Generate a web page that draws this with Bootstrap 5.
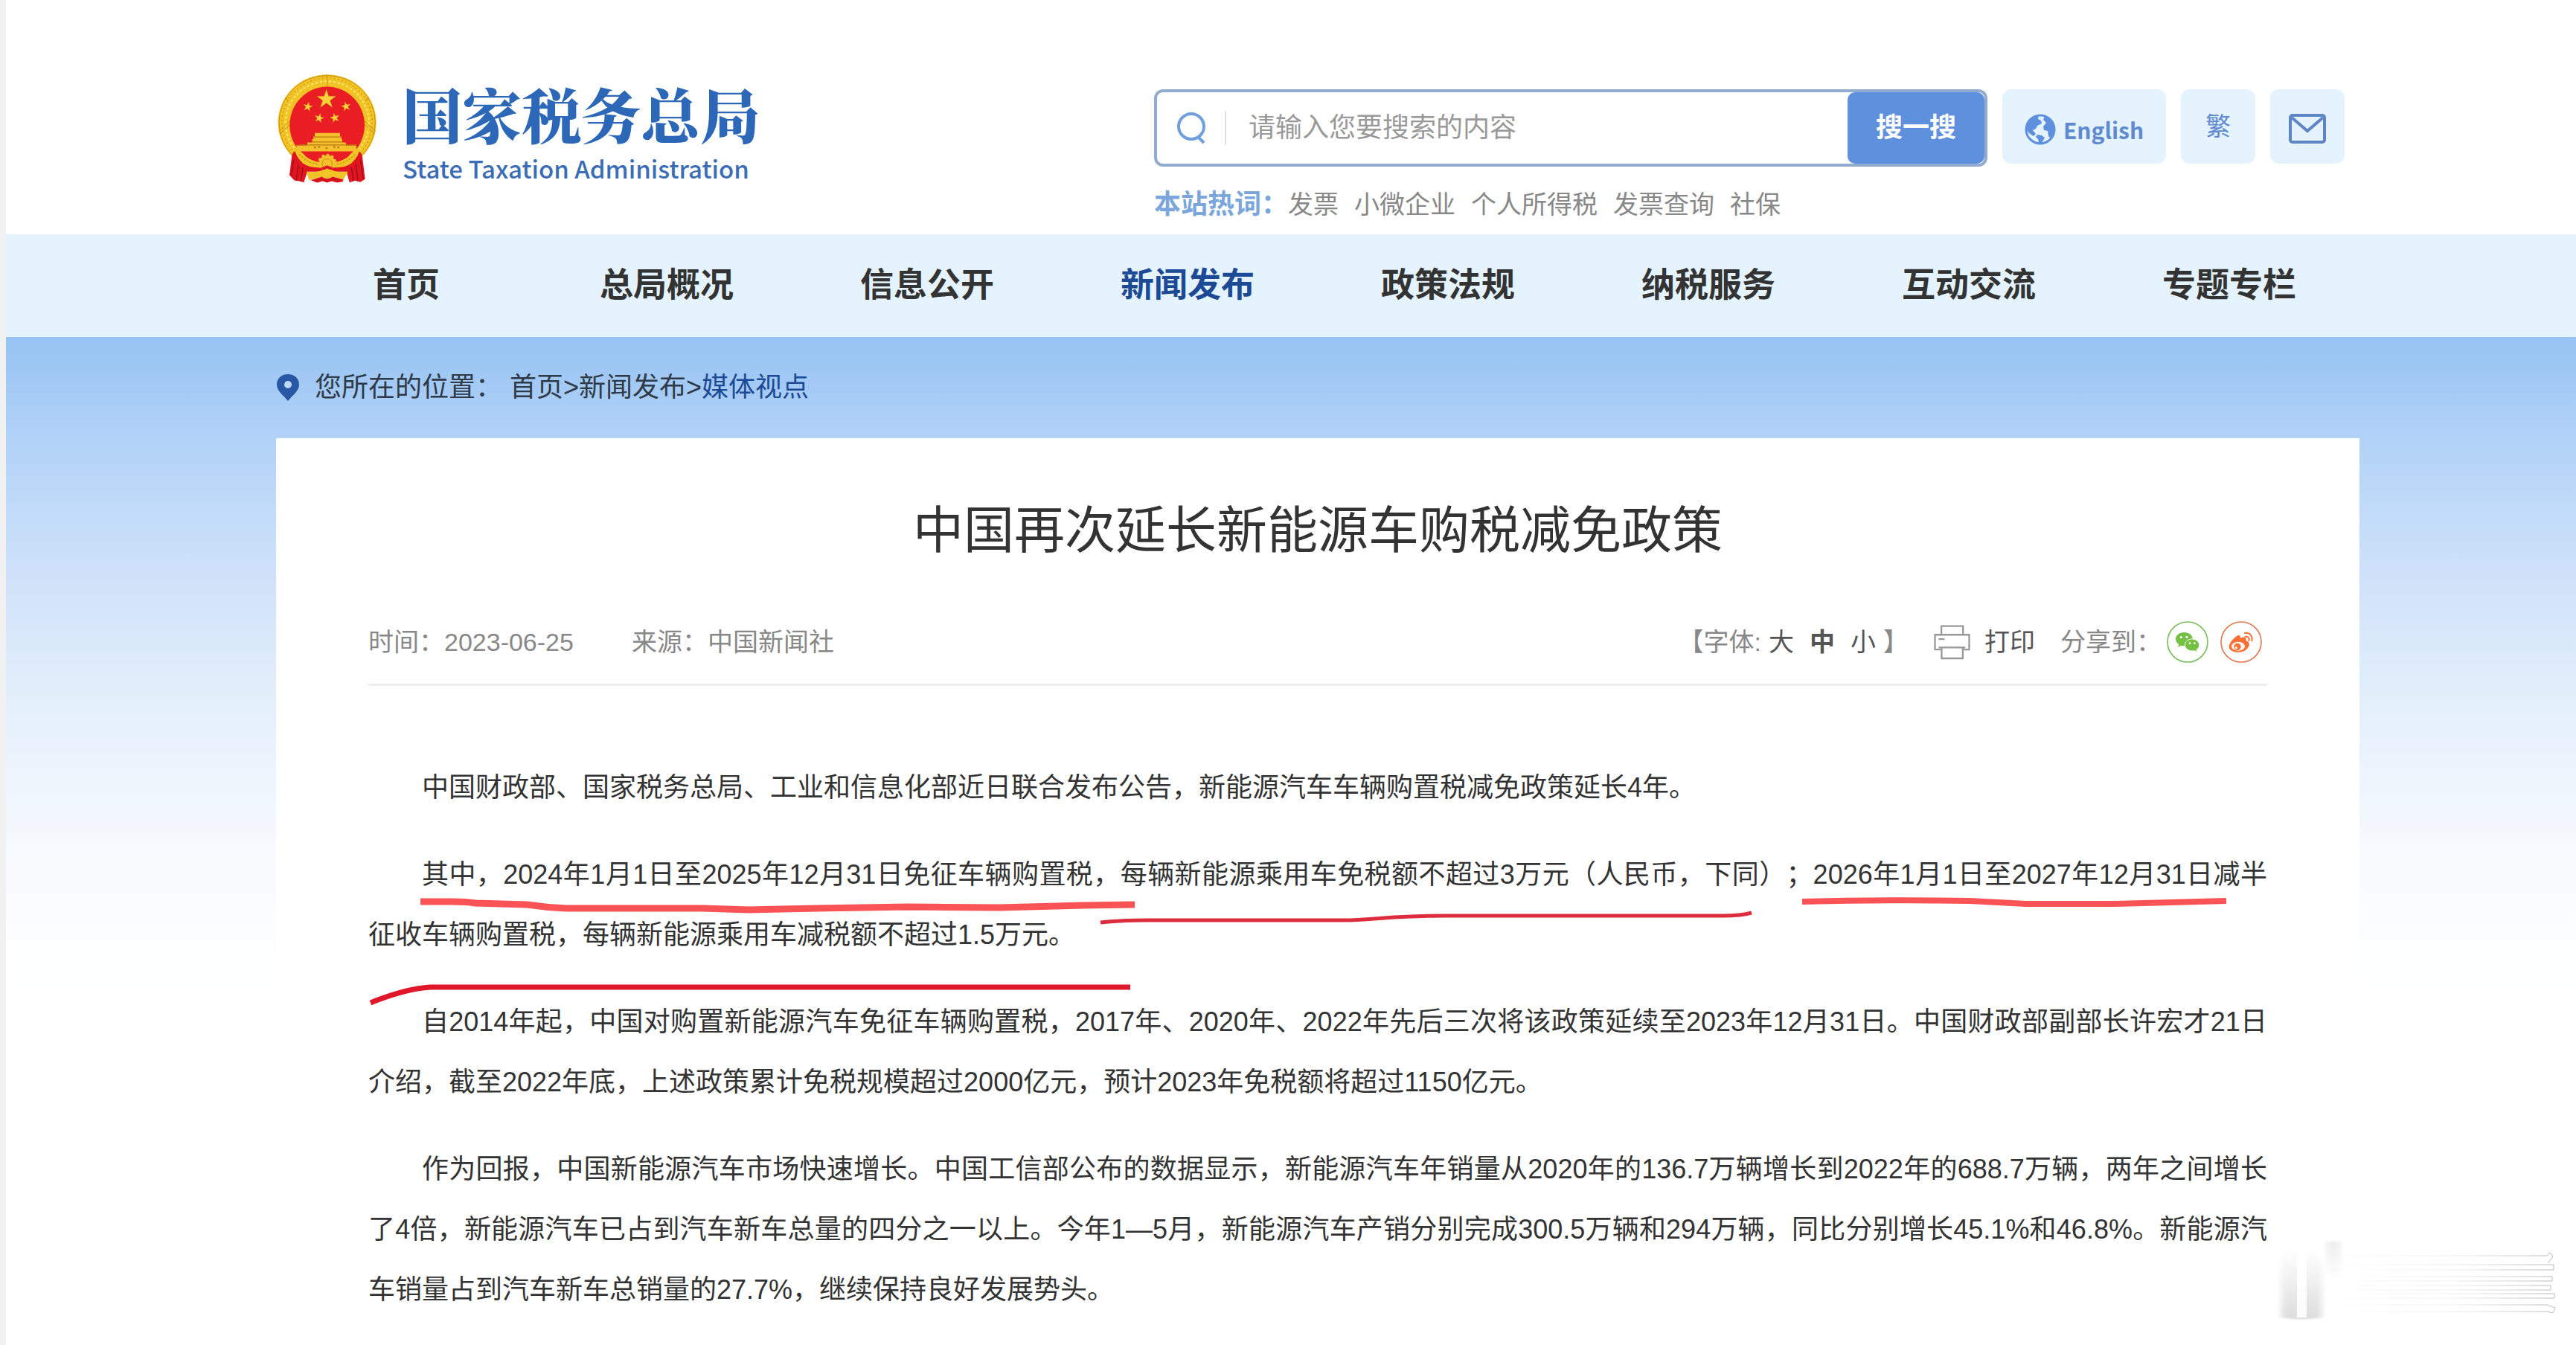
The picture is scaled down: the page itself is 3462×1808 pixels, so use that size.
<!DOCTYPE html>
<html lang="zh-CN">
<head>
<meta charset="utf-8">
<meta name="viewport" content="width=device-width, initial-scale=1">
<title>中国再次延长新能源车购税减免政策</title>
<link href="https://cdn.jsdelivr.net/npm/bootstrap@5.3.0/dist/css/bootstrap.min.css" rel="stylesheet">
<style>
body{font-family:"Liberation Sans","Noto Sans CJK SC",sans-serif;font-size:36px;color:#333;background:#fff;border-left:8px solid #f1f1f1;overflow-x:hidden;text-spacing-trim:space-all}
a{text-decoration:none;color:inherit}
svg{flex-shrink:0}
.site-wrap{padding-left:363px;padding-right:291px}
.site-head{height:315px}
.brand{padding-top:100px;gap:34px}
.brand-cn{font-family:"Noto Serif CJK SC","Noto Sans CJK SC",serif;font-weight:900;font-size:80px;line-height:108px;color:#2d68b8}
.brand-en{font-family:"Noto Sans CJK SC",sans-serif;font-weight:500;font-size:33px;line-height:40px;color:#3a6db5}
.brand-text{margin-top:-2px}
.tools{width:1620px;padding-top:120px}
.tool-row{gap:20px}
.search-box{width:1120px;height:104px;border:4px solid #94abd0;border-radius:12px;background:#fff;padding-left:26px}
.search-box input{font-size:36px;color:#333;border:0;box-shadow:none!important;padding:0 0 0 30px;background:none}
.search-box input::placeholder{color:#999;opacity:1}
.sep{width:2px;height:46px;background:#dde1e6;margin-left:25px}
.btn-go{width:184px;background:#5f90de;color:#fff;font-weight:700;font-size:36px;border:0;border-radius:10px}
.btn-tool{height:100px;background:#e4f3fe;border:0;border-radius:12px;color:#5f8ad0;font-size:34px;width:100px;padding:0}
.btn-lang{width:220px;font-family:"Noto Sans CJK SC",sans-serif;font-weight:700;font-size:30px;gap:10px;padding-top:8px}
.hot{font-size:34px;line-height:54px;color:#888;margin-top:24px}
.hot strong{font-size:36px;color:#7ba6dc}
.hot-list{gap:21px}
.main-nav{background:#e4f3fe}
.main-nav .nav-link{font-size:45px;font-weight:700;color:#333;line-height:138px;padding:0}
.main-nav .nav-link.active{color:#1c4a94}
.backdrop{background:linear-gradient(#96c3f2 0,#b0d1f7 128px,#c6def9 268px,#d2e2f9 338px,#e0eefb 464px,#edf4fd 583px,#f7fafe 690px,#fdfefe 830px,#fff 900px)}
.crumb{height:136px;color:#2f3a48}
.crumb svg{margin-right:20px}
.crumb a.cur{color:#1c4a94}
.crumb-path{margin-left:10px}
.paper{background:#fff;padding:76px 124px 34px}
.paper h1{font-size:68px;line-height:96px;font-weight:400;color:#333}
.meta{font-size:34px;line-height:56px;height:87px;color:#888;margin-top:74px;padding-bottom:28px;border-bottom:3px solid #eee}
.meta-src{gap:78px}
.meta-tools{padding-right:7px}
.meta button{border:0;background:none;padding:0;color:#555;line-height:56px}
.sizes{gap:21px;margin:0 10px}
.print-btn{gap:19px;margin:0 34px}
.share{gap:16px;margin-left:7px}
.article{margin-top:96px;position:relative}
.article p{font-size:36px;line-height:81px;margin:0 0 36px;text-indent:2em;text-align:justify}
.article p:last-of-type{margin-bottom:0}
.marks{position:absolute;left:0;top:0;overflow:visible;pointer-events:none}
.smudge{position:absolute;right:0;bottom:0;pointer-events:none}
</style>
<script src="https://cdn.jsdelivr.net/npm/bootstrap@5.3.0/dist/js/bootstrap.bundle.min.js"></script>
</head>
<body class="position-relative">
<header class="site-wrap site-head d-flex justify-content-between">
  <a href="#" class="brand d-flex align-items-start">
    <svg width="136" height="147" viewBox="34 28 408 440" aria-hidden="true">
      <defs><path id="star" d="M0-40 9-12.500 38-12.500 15 5 24 32 0 15-24 32-15 5-38-12.500-9-12.500Z"/></defs>
      <ellipse cx="240" cy="222" rx="198" ry="194" fill="#f2c324"/>
      <g fill="none" stroke="#c98f14" stroke-width="5">
        <ellipse cx="240" cy="222" rx="194" ry="190" stroke-width="3"/>
        <ellipse cx="240" cy="222" rx="182" ry="180" stroke-dasharray="4 12"/>
        <ellipse cx="240" cy="222" rx="168" ry="166" stroke="#fbe36a" stroke-width="7" stroke-dasharray="10 8"/>
        <path d="M45 258 100 205M48 268l54-50M435 258 380 205M432 268l-54-50M240 30v46M70 122l14 8M410 122l-14 8" stroke-width="3"/>
      </g>
      <ellipse cx="240" cy="232" rx="151" ry="155" fill="#ea1c24"/>
      <g fill="#fbd23c" stroke="#c9891a" stroke-width="2">
        <use href="#star" x="237" y="128"/>
        <use href="#star" transform="translate(162 158) rotate(12) scale(.5)"/>
        <use href="#star" transform="translate(316 157) rotate(-12) scale(.5)"/>
        <use href="#star" transform="translate(208 204) rotate(14) scale(.5)"/>
        <use href="#star" transform="translate(271 203) rotate(-14) scale(.5)"/>
      </g>
      <path d="M190 264h102v14h5v10h4v14h15v12h42v24H116v-24h44v-12h20v-14h5v-10h5z" fill="#f5c02c"/>
      <path d="M186 280h111M181 300h120M124 312h234" stroke="#b87a12" stroke-width="4" fill="none"/>
      <path d="M187 322h8M203 320h8M234 325h8M265 320h8M281 322h8" stroke="#c2761a" stroke-width="7"/>
      <path d="M98 352 Q104 340 112 336 Q160 402 240 398 Q320 402 366 336 Q380 345 382 360 L393 450 L374 462 L352 456 L330 463 L318 420 H160 L146 463 L128 458 L108 455 L88 434Z" fill="#e0151f"/>
      <path d="M106 372 95 434M124 392l-8 62M142 402l-8 56M374 372l12 78M356 390l8 68M338 402l8 56" stroke="#96101a" stroke-width="4" fill="none"/>
      <path d="M108 322 Q130 330 160 364 Q200 386 240 382 Q280 386 320 364 Q348 330 372 322 Q372 352 338 386 Q300 412 240 398 Q180 412 142 386 Q108 352 108 322Z" fill="#f2c324"/>
      <path d="M128 350q45 46 96 40M352 350q-45 46-96 40" stroke="#c98f14" stroke-width="4" stroke-dasharray="7 6" fill="none"/>
      <circle cx="240" cy="386" r="33" fill="#f5c02c" stroke="#f5c02c" stroke-width="11" stroke-dasharray="10 9"/>
      <circle cx="240" cy="388" r="20" fill="none" stroke="#c98f14" stroke-width="3"/>
      <path d="M130 384 Q180 424 240 394 Q300 424 350 384 Q340 420 290 416 Q258 418 240 406 Q222 418 190 416 Q144 420 130 384Z" fill="#e0151f"/>
      <path d="M156 420 Q200 424 224 412 H256 Q280 424 324 420 L306 452 L262 440 Q240 456 218 440 L168 454Z" fill="#f2c324"/>
      <path d="M174 454 218 440Q240 456 262 440L306 452 302 460 280 464 258 458 240 464 222 458 200 464Z" fill="#d8121c"/>
    </svg>
    <span class="brand-text d-flex flex-column"><span class="brand-cn">国家税务总局</span><span class="brand-en mt-n2">State Taxation Administration</span></span>
  </a>
  <div class="tools">
    <div class="tool-row d-flex">
      <form class="search-box d-flex align-items-center" role="search">
        <svg width="40" height="44" viewBox="0 0 40 44" fill="none" stroke="#6f9fdd" stroke-width="4" aria-hidden="true"><circle cx="20" cy="20" r="17"/><path d="M29 34l8 8"/></svg>
        <span class="sep flex-shrink-0"></span>
        <input class="form-control h-100" type="text" aria-label="搜索" placeholder="请输入您要搜索的内容">
        <button type="button" class="btn-go h-100 flex-shrink-0">搜一搜</button>
      </form>
      <button type="button" class="btn-tool btn-lang d-flex align-items-center justify-content-center">
        <svg width="42" height="42" viewBox="0 0 42 42" aria-hidden="true"><circle cx="21" cy="21" r="19" fill="none" stroke="#5f90de" stroke-width="3"/><path d="M19 2C9 3 3 10 2 20l4 6 6 4 3-3-4-5 4-2 2-4 6-3-1-4-4-2zM27 3l-2 5 4 4-4 5 1 5 5 1 1 7 3 3c4-5 6-9 5-14C39 11 34 5 27 3zM17 28l6 1 4 3-3 5-1 3-4-1-1-5-3-3z" fill="#5f90de"/></svg>
        <span>English</span></button>
      <button type="button" class="btn-tool">繁</button>
      <button type="button" class="btn-tool" aria-label="邮箱"><svg width="50" height="40" viewBox="0 0 50 40" fill="none" stroke="#5f86c4" stroke-width="4" aria-hidden="true"><rect x="2" y="2" width="46" height="36" rx="3"/><path d="M4 5l21 18L46 5"/></svg></button>
    </div>
    <div class="hot d-flex"><strong>本站热词：</strong><div class="hot-list d-flex"><a href="#">发票</a><a href="#">小微企业</a><a href="#">个人所得税</a><a href="#">发票查询</a><a href="#">社保</a></div></div>
  </div>
</header>
<nav class="main-nav site-wrap" aria-label="主导航">
  <div class="nav nav-justified flex-nowrap">
    <a class="nav-link" href="#">首页</a><a class="nav-link" href="#">总局概况</a><a class="nav-link" href="#">信息公开</a><a class="nav-link active" aria-current="page" href="#">新闻发布</a><a class="nav-link" href="#">政策法规</a><a class="nav-link" href="#">纳税服务</a><a class="nav-link" href="#">互动交流</a><a class="nav-link" href="#">专题专栏</a>
  </div>
</nav>
<div class="backdrop site-wrap">
  <div class="crumb d-flex align-items-center">
    <svg width="32" height="38" viewBox="0 0 32 38" aria-hidden="true"><path d="M16 1C7 1 1 7 1 15c0 9 9 14 15 22 6-8 15-13 15-22C31 7 25 1 16 1z" fill="#2857a4"/><circle cx="16" cy="15" r="5" fill="#bfd8f6"/></svg>
    <span>您所在的位置：</span>
    <span class="crumb-path"><a href="#">首页</a>&gt;<a href="#">新闻发布</a>&gt;<a class="cur" href="#">媒体视点</a></span>
  </div>
  <main class="paper">
    <h1 class="text-center m-0">中国再次延长新能源车购税减免政策</h1>
    <div class="meta d-flex justify-content-between">
      <div class="meta-src d-flex"><span>时间：2023-06-25</span><span>来源：中国新闻社</span></div>
      <div class="meta-tools d-flex align-items-center">
        <span>【字体:</span>
        <div class="sizes d-flex"><button type="button">大</button><button type="button" class="fw-bold">中</button><button type="button">小</button></div>
        <span>】</span>
        <button type="button" class="print-btn d-flex align-items-center"><svg width="49" height="47" viewBox="57 97 147 142" fill="none" stroke="#999" stroke-width="7" aria-hidden="true"><path d="M87 137V102h88v35M84 197H61v-60h139v60h-22M76 189h108M88 189v44h86v-44M76 155h24"/></svg><span>打印</span></button>
        <span>分享到：</span>
        <div class="share d-flex">
          <a href="#" class="d-flex" aria-label="微信"><svg width="56" height="56" viewBox="996 74 168 168" aria-hidden="true"><circle cx="1080" cy="158" r="81" fill="#fff" stroke="#7cbd5c" stroke-width="5"/><path d="M1066 119c-19 0-34 12-34 27 0 9 5 17 13 21l-4 12 14-7c4 1 7 2 11 2 19 0 34-12 34-28s-15-27-34-27z" fill="#74c043"/><path d="M1098 146c-16 0-29 11-29 24s13 24 29 24c4 0 7 0 10-1l12 6-4-10c7-4 11-11 11-19 0-13-13-24-29-24z" fill="#74c043" stroke="#fff" stroke-width="3"/><g fill="#fff"><circle cx="1054" cy="139" r="5"/><circle cx="1077" cy="138" r="5"/><circle cx="1089" cy="163" r="4"/><circle cx="1108" cy="163" r="4"/></g></svg></a>
          <a href="#" class="d-flex" aria-label="微博"><svg width="56" height="56" viewBox="1212 74 168 168" aria-hidden="true"><circle cx="1296" cy="158" r="81" fill="#fff" stroke="#df7c55" stroke-width="5"/><path d="M1278 134c10-6 17-2 14 8 12-5 25-5 24 6l-1 5c22 5 14 30-4 40-26 13-62 5-64-14-1-14 15-34 31-45z" fill="#fb6f33"/><ellipse cx="1284" cy="175" rx="27" ry="18" fill="#fff"/><circle cx="1281" cy="177" r="14" fill="#fb6f33"/><circle cx="1276" cy="181" r="5" fill="#fff"/><path d="M1312 136c11-2 18 6 15 17M1311 122c20-3 33 13 28 31" fill="none" stroke="#fb6f33" stroke-width="6" stroke-linecap="round"/></svg></a>
        </div>
      </div>
    </div>
    <div class="article">
      <p>中国财政部、国家税务总局、工业和信息化部近日联合发布公告，新能源汽车车辆购置税减免政策延长4年。</p>
      <p>其中，2024年1月1日至2025年12月31日免征车辆购置税，每辆新能源乘用车免税额不超过3万元（人民币，下同）<span>；</span>2026年1月1日至2027年12月31日减半征收车辆购置税，每辆新能源乘用车减税额不超过1.5万元。</p>
      <p>自2014年起，中国对购置新能源汽车免征车辆购置税，2017年、2020年、2022年先后三次将该政策延续至2023年12月31日。中国财政部副部长许宏才21日介绍，截至2022年底，上述政策累计免税规模超过2000亿元，预计2023年免税额将超过1150亿元。</p>
      <p>作为回报，中国新能源汽车市场快速增长。中国工信部公布的数据显示，新能源汽车年销量从2020年的136.7万辆增长到2022年的688.7万辆，两年之间增长了4倍，新能源汽车已占到汽车新车总量的四分之一以上。今年1—5月，新能源汽车产销分别完成300.5万辆和294万辆，同比分别增长45.1%和46.8%。新能源汽车销量占到汽车新车总销量的27.7%，继续保持良好发展势头。</p>
      <svg class="marks" width="2552" height="340" viewBox="0 0 2552 340" fill="none" stroke-linejoin="round" aria-hidden="true">
        <path d="M70 194H113Q130 194 144 196L213 198Q240 202 266 203H450L511 205 603 203 726 201 848 202 963 199 1030 198" stroke="#f95355" stroke-width="9"/>
        <path d="M1927 194Q2040 191 2152 193L2228 197 2347 197 2423 195 2497 193" stroke="#f95355" stroke-width="8"/>
        <path d="M984 222Q1010 219 1046 219H1310C1350 219 1370 213 1447 213H1821Q1845 213 1859 209" stroke="#dc2c3e" stroke-width="5"/>
        <path d="M3 330Q50 311 83 309H1024" stroke="#e0162b" stroke-width="7"/>
      </svg>
    </div>
  </main>
</div>
<svg class="smudge" width="462" height="168" viewBox="0 0 462 168" fill="none" aria-hidden="true">
  <defs>
    <linearGradient id="fadeR" gradientUnits="userSpaceOnUse" x1="120" y1="0" x2="425" y2="0"><stop offset="0" stop-color="#ccc" stop-opacity="0"/><stop offset=".6" stop-color="#ccc" stop-opacity=".35"/><stop offset="1" stop-color="#bbb"/></linearGradient>
    <linearGradient id="fadeD" x1="0" y1="0" x2="0" y2="1"><stop offset="0" stop-color="#ddd" stop-opacity="0"/><stop offset="1" stop-color="#dcdcdc"/></linearGradient>
    <linearGradient id="fadeU" x1="0" y1="0" x2="0" y2="1"><stop offset="0" stop-color="#eee"/><stop offset="1" stop-color="#eee" stop-opacity="0"/></linearGradient>
    <filter id="soft"><feGaussianBlur stdDeviation="4 1"/></filter>
  </defs>
  <path d="M66 40H120V131Q92 136 66 131Z" fill="url(#fadeD)" filter="url(#soft)"/>
  <path d="M87 34h13v97H87z" fill="#fff" opacity=".9"/>
  <path d="M126 29h20v50h-20z" fill="url(#fadeU)" filter="url(#soft)"/>
  <path d="M60 48H423L427 44 431 49 424 58M60 60H432V67H110M120 76H430V82H110M120 88H428V94H110M120 99H433V105H110M150 114H423L434 118 431 125 423 123H150" stroke="url(#fadeR)" stroke-width="1"/>
</svg>
</body>
</html>
